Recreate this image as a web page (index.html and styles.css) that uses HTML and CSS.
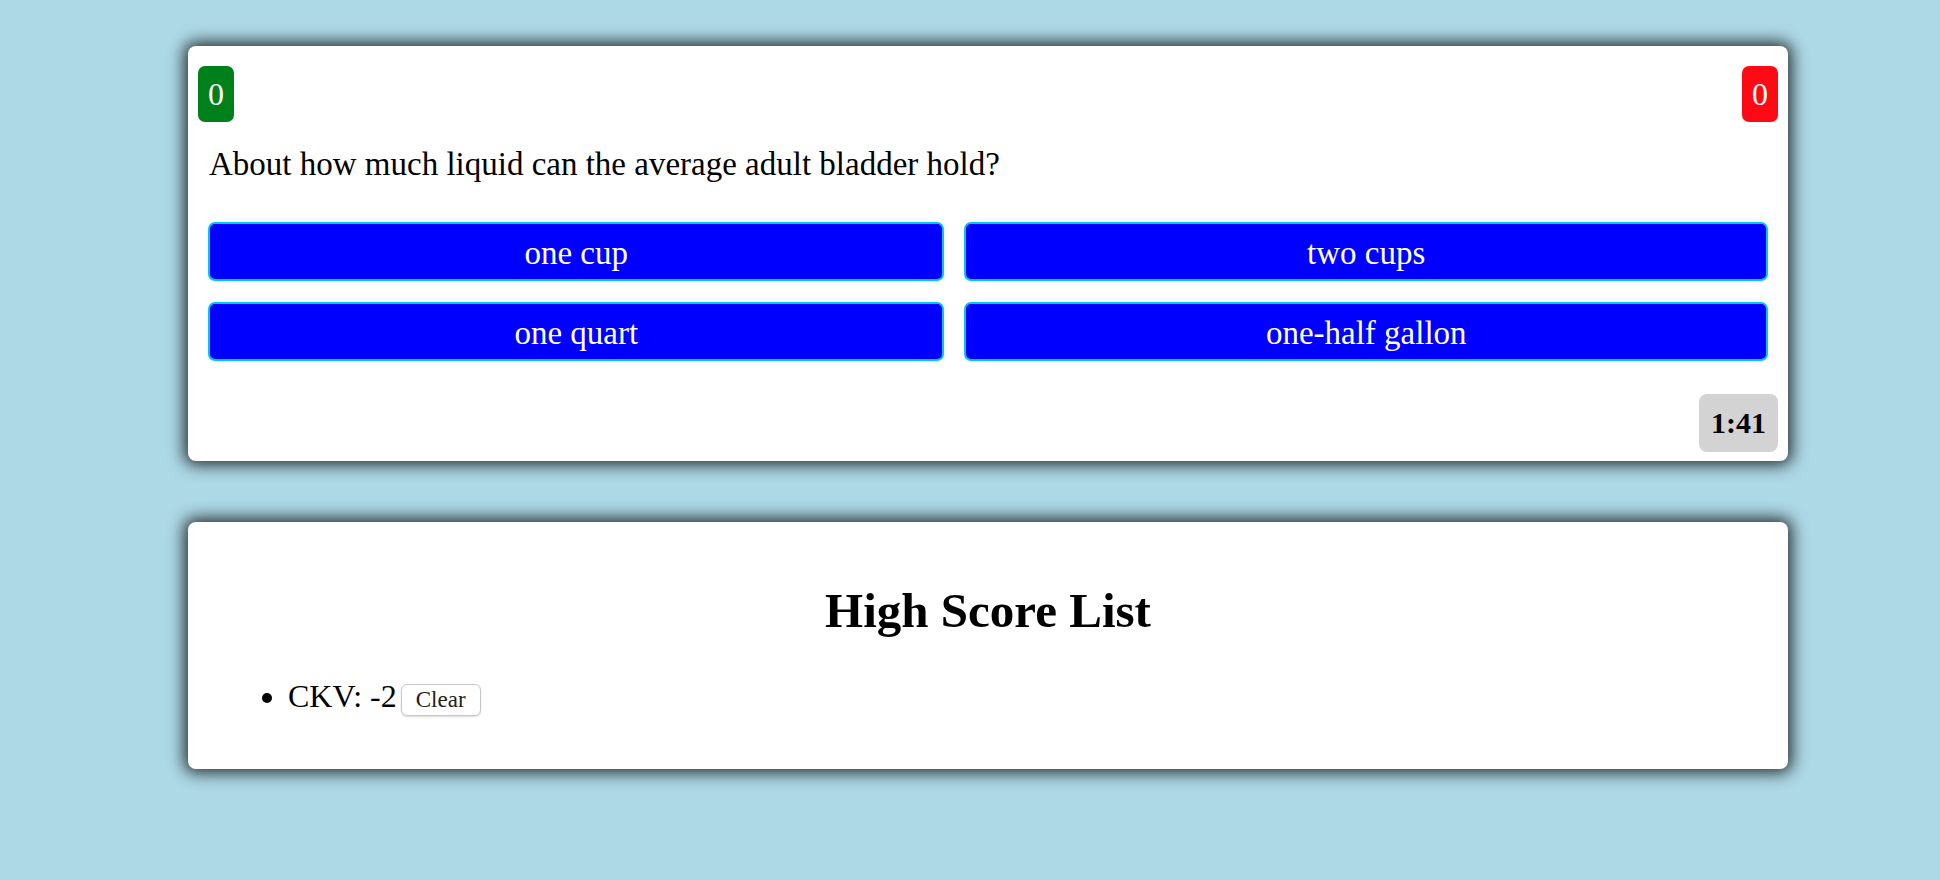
FILE: index.html
```html
<!DOCTYPE html>
<html>
<head>
<meta charset="utf-8">
<link rel="stylesheet" href="styles.css">
</head>
<body>
<div class="page">
  <section class="card quiz">
    <div class="score-row">
      <div class="badge badge-correct">0</div>
      <div class="badge badge-wrong">0</div>
    </div>
    <p class="question">About how much liquid can the average adult bladder hold?</p>
    <div class="answers">
      <button class="answer">one cup</button>
      <button class="answer">two cups</button>
      <button class="answer">one quart</button>
      <button class="answer">one-half gallon</button>
    </div>
    <div class="timer-row">
      <div class="timer">1:41</div>
    </div>
  </section>
  <section class="card scores">
    <h2 class="scores-title">High Score List</h2>
    <ul class="score-list">
      <li>CKV: -2<button class="clear-btn">Clear</button></li>
    </ul>
  </section>
</div>
</body>
</html>
```
FILE: styles.css
```css
html, body {
  margin: 0;
  padding: 0;
}
body {
  background: #add8e6;
  font-family: "Liberation Serif", "DejaVu Serif", serif;
  color: #000;
  height: 880px;
  overflow: hidden;
}
.page {
  width: 1600px;
  margin-left: 188px;
  padding-top: 46px;
  display: flex;
  flex-direction: column;
  gap: 61px;
}
.card {
  background: #fff;
  border-radius: 8px;
  box-shadow: 0 0 16px 4px rgba(0, 0, 0, 0.78);
}
.quiz {
  padding: 20px 10px 9px;
}
.score-row {
  display: flex;
  justify-content: space-between;
}
.badge {
  width: 36px;
  height: 56px;
  border-radius: 7px;
  color: #fff;
  font-size: 32px;
  line-height: 56px;
  text-align: center;
}
.badge-correct { background: #00801a; }
.badge-wrong { background: #ff0a14; }
.question {
  margin: 22px 10px 0 11px;
  font-size: 33px;
  line-height: 40px;
}
.answers {
  margin: 38px 10px 0;
  display: grid;
  grid-template-columns: 736fr 803fr;
  column-gap: 20px;
  row-gap: 21px;
}
.answer {
  height: 59px;
  background: #0000ff;
  color: #fff;
  border: 2px solid #00c8e6;
  border-radius: 7px;
  font-family: "Liberation Serif", "DejaVu Serif", serif;
  font-size: 33px;
  line-height: 51px;
  padding: 4px 0 0;
  text-align: center;
}
.timer-row {
  display: flex;
  justify-content: flex-end;
  margin-top: 33px;
}
.timer {
  height: 58px;
  padding: 0 12px;
  background: #d3d3d3;
  border-radius: 8px;
  font-size: 30px;
  font-weight: bold;
  line-height: 58px;
}
.scores {
  padding: 59px 0 53px;
}
.scores-title {
  margin: 0;
  text-align: center;
  font-size: 49px;
  line-height: 60px;
  font-weight: bold;
}
.score-list {
  margin: 35px 0 0;
  padding-left: 100px;
  font-size: 32px;
  line-height: 40px;
}
.clear-btn {
  margin-left: 4px;
  height: 32px;
  padding: 0 14px;
  vertical-align: middle;
  background: #fff;
  color: #222;
  border: 1px solid #c8c8c8;
  border-radius: 6px;
  box-shadow: 0 1px 2px rgba(0, 0, 0, 0.15);
  font-family: "Liberation Serif", "DejaVu Serif", serif;
  font-size: 23px;
  line-height: 30px;
}
```
